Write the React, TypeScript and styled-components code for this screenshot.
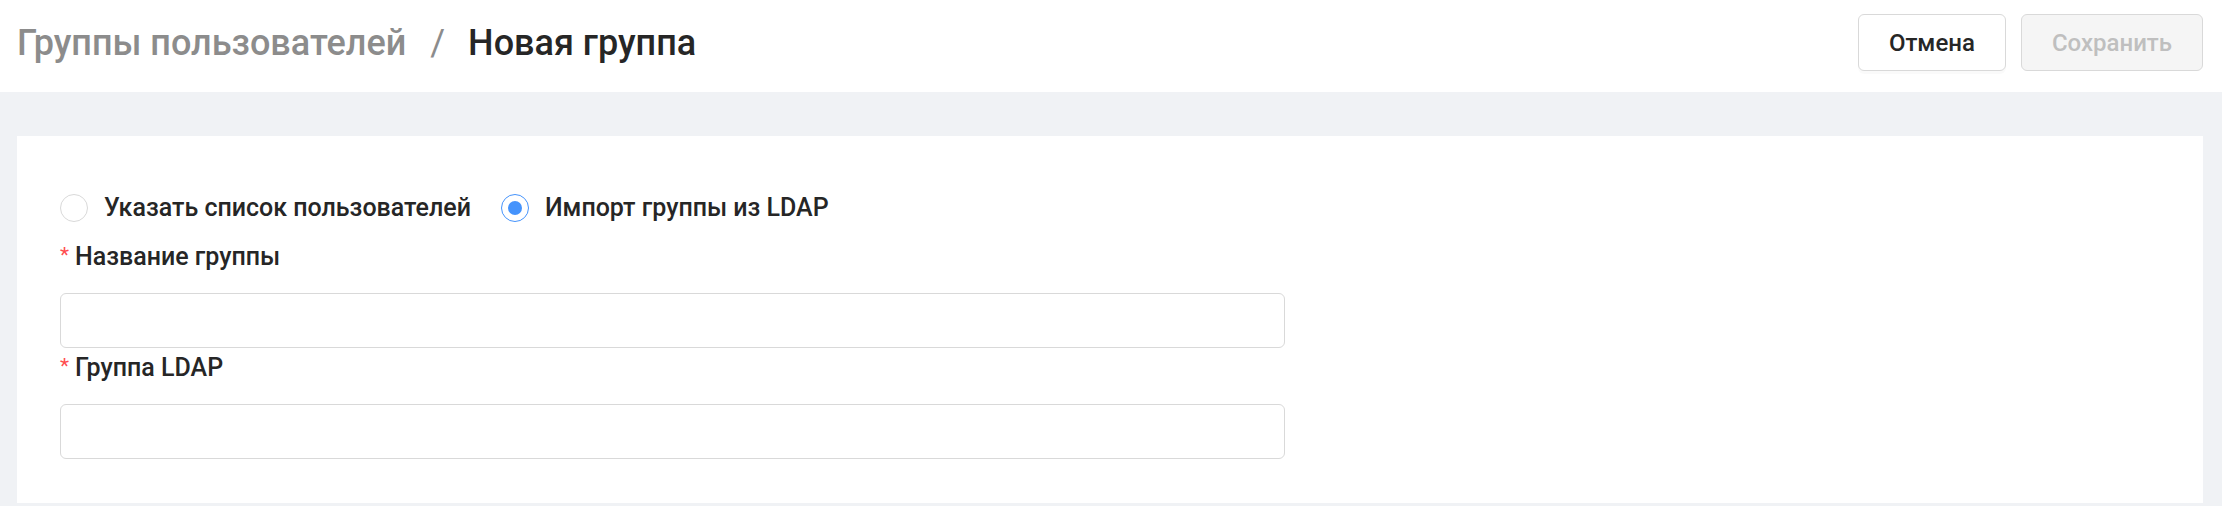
import { FC, useState } from "react";
import styled, { createGlobalStyle } from "styled-components";

const GlobalStyle = createGlobalStyle`
    html, body {
        margin: 0;
        padding: 0;
        background-color: #f0f2f5;
        font-family: Roboto, "Noto Sans", "Liberation Sans", sans-serif;
    }
    * {
        box-sizing: border-box;
    }
`;

type Mode = "list" | "ldap";

const App: FC<{}> = () => {
    const [mode, setMode] = useState<Mode>("ldap");
    const [name, setName] = useState("");
    const [ldapGroup, setLdapGroup] = useState("");

    return (
        <Page>
            <GlobalStyle />
            <Header>
                <Breadcrumb>
                    <Crumb>Группы пользователей</Crumb>
                    <Separator>/</Separator>
                    <Crumb $current>Новая группа</Crumb>
                </Breadcrumb>
                <Actions>
                    <Button type="button">Отмена</Button>
                    <Button type="button" disabled>Сохранить</Button>
                </Actions>
            </Header>
            <Content>
                <Card>
                    <RadioGroup>
                        <RadioOption onClick={() => setMode("list")}>
                            <RadioCircle $checked={mode === "list"} />
                            <span>Указать список пользователей</span>
                        </RadioOption>
                        <RadioOption onClick={() => setMode("ldap")}>
                            <RadioCircle $checked={mode === "ldap"} />
                            <span>Импорт группы из LDAP</span>
                        </RadioOption>
                    </RadioGroup>
                    <Field>
                        <Label><Star>*</Star>Название группы</Label>
                        <Input value={name} onChange={e => setName(e.target.value)} />
                    </Field>
                    <Field>
                        <Label><Star>*</Star>Группа LDAP</Label>
                        <Input value={ldapGroup} onChange={e => setLdapGroup(e.target.value)} />
                    </Field>
                </Card>
            </Content>
        </Page>
    );
};

export default App;

const Page = styled.div`
    width: 100%;
    height: 506px;
    display: flex;
    flex-direction: column;
    background-color: #f0f2f5;
`;

const Header = styled.header`
    height: 92px;
    flex-shrink: 0;
    background-color: #ffffff;
    display: flex;
    flex-direction: row;
    align-items: center;
    justify-content: space-between;
    padding: 0 19px 7px 17px;
`;

const Breadcrumb = styled.nav`
    display: flex;
    flex-direction: row;
    align-items: center;
    font-size: 36px;
    font-weight: 500;
    line-height: 44px;
`;

const Crumb = styled.span<{ $current?: boolean }>`
    color: ${p => (p.$current ? "#262626" : "#8c8c8c")};
`;

const Separator = styled.span`
    color: #8c8c8c;
    margin: 0 23px 0 24px;
    font-weight: 400;
`;

const Actions = styled.div`
    display: flex;
    flex-direction: row;
    align-items: center;
    gap: 15px;
`;

const Button = styled.button`
    height: 57px;
    padding: 0 30px;
    border: 1px solid #d9d9d9;
    border-radius: 6px;
    background-color: #ffffff;
    color: #262626;
    font-family: inherit;
    font-size: 24px;
    font-weight: 500;
    box-shadow: 0 3px 0 rgba(0, 0, 0, 0.02);
    cursor: pointer;

    &:disabled {
        background-color: #f5f5f5;
        color: #bfbfbf;
        box-shadow: none;
        cursor: not-allowed;
    }
`;

const Content = styled.main`
    flex: 1;
    padding: 44px 19px 3px 17px;
    display: flex;
`;

const Card = styled.section`
    flex: 1;
    background-color: #ffffff;
    padding: 54px 43px 0 43px;
    display: flex;
    flex-direction: column;
`;

const RadioGroup = styled.div`
    display: flex;
    flex-direction: row;
    align-items: center;
    gap: 30px;
    height: 35px;
`;

const RadioOption = styled.label`
    display: flex;
    flex-direction: row;
    align-items: center;
    gap: 16px;
    font-size: 25px;
    font-weight: 500;
    color: #262626;
    cursor: pointer;
`;

const RadioCircle = styled.span<{ $checked: boolean }>`
    position: relative;
    width: 28px;
    height: 28px;
    border-radius: 50%;
    border: 1.5px solid ${p => (p.$checked ? "#4593fc" : "#d9d9d9")};
    background-color: #ffffff;
    flex-shrink: 0;

    &::after {
        content: "";
        display: ${p => (p.$checked ? "block" : "none")};
        position: absolute;
        top: 50%;
        left: 50%;
        width: 14px;
        height: 14px;
        margin: -7px 0 0 -7px;
        border-radius: 50%;
        background-color: #4593fc;
    }
`;

const Field = styled.div`
    display: flex;
    flex-direction: column;
    margin-top: 15px;

    & + & {
        margin-top: 3px;
    }
`;

const Label = styled.div`
    font-size: 25px;
    font-weight: 500;
    line-height: 34px;
    color: #262626;
    margin-bottom: 19px;
    display: flex;
    align-items: center;
`;

const Star = styled.span`
    color: #ff4d4f;
    font-size: 21px;
    font-weight: 400;
    margin-right: 6px;
    align-self: flex-start;
    line-height: 30px;
`;

const Input = styled.input`
    width: 1225px;
    height: 55px;
    border: 1px solid #d9d9d9;
    border-radius: 6px;
    padding: 0 16px;
    font-family: inherit;
    font-size: 24px;
    color: #262626;
    outline: none;

    &:focus {
        border-color: #4593fc;
    }
`;
